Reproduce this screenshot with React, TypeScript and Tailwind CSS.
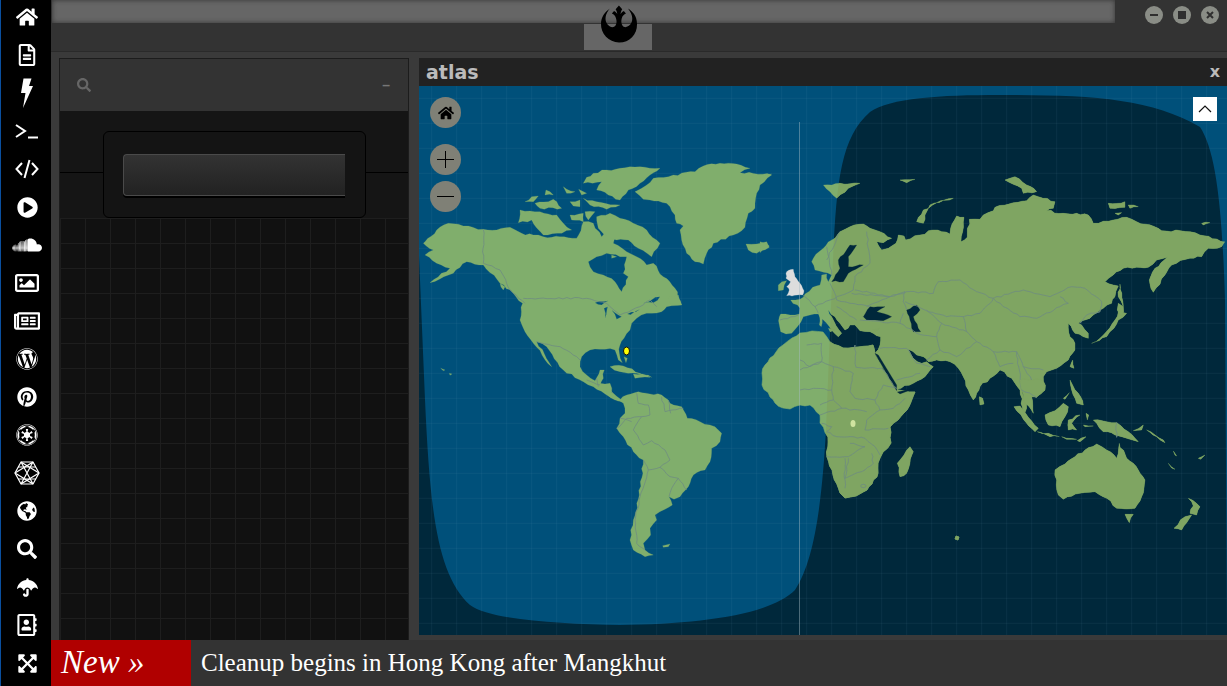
import {
  FaHome, FaRegFileAlt, FaPlayCircle, FaSoundcloud, FaRegImage, FaRegNewspaper, FaWordpress, FaPinterest,
  FaEmpire, FaGlobeAmericas, FaSearch, FaUmbrella, FaRegAddressBook, FaExpandArrowsAlt, FaRebel,
} from "react-icons/fa";

const DAY_SEA = "#00507a";
const NIGHT_SEA = "#00283b";

// night side of the map, in page coordinates
const nightShape =
  "M419 256 L425 400 C430 510 437 575 470 605 C490 620 560 624 620 625 C700 624 770 615 795 590 C815 560 822 500 826 430 L832 283 C836 190 838 140 870 112 C890 98 940 95 1000 95 C1090 95 1150 98 1200 127 C1215 150 1222 200 1225 300 L1227 636 L419 636 Z";

// breaks long straight edges into small wobbly steps so coasts read as coasts
function rough(points: string, step = 14, amp = 3.5, closed = true) {
  const pts = points.trim().split(/\s+/).map((p) => p.split(",").map(Number));
  const out: string[] = [];
  const count = closed ? pts.length : pts.length - 1;
  for (let i = 0; i < count; i++) {
    const [x1, y1] = pts[i];
    const [x2, y2] = pts[(i + 1) % pts.length];
    const len = Math.hypot(x2 - x1, y2 - y1);
    const n = Math.max(1, Math.round(len / step));
    out.push(`${x1},${y1}`);
    for (let k = 1; k < n; k++) {
      const x = x1 + ((x2 - x1) * k) / n;
      const y = y1 + ((y2 - y1) * k) / n;
      const s = Math.sin(x * 12.9898 + y * 78.233) * 43758.5453;
      const off = (s - Math.floor(s) - 0.5) * 2 * amp;
      out.push(`${(x - ((y2 - y1) / len) * off).toFixed(1)},${(y + ((x2 - x1) / len) * off).toFixed(1)}`);
    }
  }
  if (!closed) out.push(pts[pts.length - 1].join(","));
  return out.join(" ");
}

// origin 420,140 at 3x
const americasNorth = [
  "645,155 665,145 700,115 760,105 825,95 850,78 900,70 950,72 990,85 960,98 1055,105 1020,135 1010,160 1005,205 985,220 975,262 940,285 880,310 860,340 850,372 825,365 800,340 785,300 780,270 790,258 770,250 765,225 740,190 690,180 670,178",
  "520,100 560,90 600,85 660,80 720,85 690,105 660,130 625,150 600,180 565,165 530,150 545,125 490,130 500,112",
  "430,140 465,155 440,160",
  "476,148 500,160 485,165",
  "378,150 400,165 375,165",
  "315,185 335,170 355,168 340,185",
  "345,190 385,185 400,178 425,205 360,205",
  "450,185 480,180 480,200 460,198",
  "490,175 530,185 600,195 560,208 510,195",
  "495,215 525,215 505,240",
  "530,230 570,220 600,235 640,250 680,270 720,310 695,350 655,325 625,300 590,300 565,290 535,265",
  "300,210 360,215 410,225 430,250 455,270 410,280 370,285 335,240 295,248",
  "450,225 490,220 490,245 455,240",
  "575,345 590,350 575,355",
  "745,470 775,465 785,495 750,490",
  "240,430 255,440 250,450",
  "978,312 1010,312 1040,305 1048,322 1010,340 985,330",
  "1075,435 1100,422 1090,450 1075,452",
  "570,680 610,678 660,700 695,712 650,700 600,695",
  "640,702 680,706 690,712 645,715",
  "62,685 75,690 70,692",
  "88,700 96,702 90,706",
  "612,650 622,655 618,668",
];

const northAmerica =
  "15,305 50,270 85,250 130,258 190,268 230,270 270,262 305,280 340,285 370,290 420,290 470,295 490,245 520,250 545,290 560,265 590,265 580,310 620,335 650,350 680,375 700,370 730,410 765,445 785,495 740,500 725,515 680,520 650,535 635,550 630,570 612,595 600,615 598,640 607,668 595,660 585,630 555,628 510,630 485,650 480,680 500,705 525,722 540,690 553,690 550,715 540,735 580,760 610,785 580,775 520,740 490,725 430,690 380,620 350,605 395,680 340,610 315,575 300,540 308,490 280,460 240,430 190,375 140,365 100,400 30,428 90,385 50,370 15,345 40,330 10,310";
const northAmericaWaters = [
  "505,365 530,350 560,340 600,350 620,350 610,400 625,410 605,455 585,425 550,405 520,395",
  "525,488 565,482 545,495",
  "552,505 563,500 555,535",
  "575,510 605,530 590,538",
  "622,522 660,508 632,524",
  "668,490 720,470 700,488",
];
const britain = "1100,395 1120,388 1125,410 1140,430 1152,452 1148,465 1100,467 1108,450 1100,440 1112,425 1098,415";

const americasBorders = [
  "190,268 190,370 240,390 270,450 315,490",
  "310,475 500,475 560,490 600,525 660,500 690,480 710,500",
  "350,605 420,620 470,650 480,660",
  "500,720 540,735 580,760",
  "530,715 535,740",
];

// origin 600,380 at 3x
const southAmerica =
  "0,10 30,10 35,40 60,60 80,45 115,35 150,42 185,45 210,70 245,80 262,115 300,125 345,140 365,160 360,185 335,205 330,245 315,270 280,285 265,320 240,350 222,358 207,350 217,375 195,388 165,405 170,420 150,445 152,465 130,490 135,510 160,525 135,530 100,510 90,480 92,450 100,420 118,345 130,240 100,215 70,170 50,145 60,115 75,100 70,70 45,60 20,40 0,20";
const falklands = "188,497 210,492 205,500 190,502";
const southBorders = [
  "110,40 115,70 145,75 150,105 125,110 100,150 130,195 155,182 195,210 210,240 180,262 210,290 235,295 215,325 207,350",
  "50,145 80,115 125,110",
  "185,50 195,95 250,85",
  "130,240 145,270 180,262",
  "145,270 120,350 105,420 110,490 135,510",
  "235,295 260,330",
  "60,115 95,125",
  "205,60 212,100",
];

// page coordinates
const africa =
  "762,373 765,365 770,358 776,352 783,345 792,338 800,333 812,331 823,332 830,342 843,348 858,347 873,345 875,355 881,366 887,377 898,390 915,392 911,402 907,410 898,420 890,427 891,443 883,452 878,463 878,473 872,484 867,490 856,496 845,498 840,493 833,475 827,457 828,437 820,423 820,415 810,405 800,405 790,409 783,408 775,403 770,397 762,385";

// origin 800,330 at 3x
const africaBorders = [
  "65,40 65,95 100,110 160,130 150,185 165,205 225,210 250,165 290,175",
  "165,45 168,112 245,115 290,175",
  "225,210 240,240 200,270 195,300 265,295",
  "240,240 280,235 315,205",
  "100,110 95,180 100,210 125,235 60,255",
  "125,235 200,245",
  "100,210 60,225",
  "80,305 110,320 150,320 195,325 225,350 240,375",
  "150,340 195,350 145,380 80,380",
  "145,385 135,445 185,425 220,400 215,370",
  "135,385 135,475",
  "0,120 65,95",
  "0,180 40,175 95,180",
  "65,280 95,290 80,305",
  "20,45 65,40",
  "65,95 30,110 0,90",
];
const madagascar = "292,400 312,375 330,350 340,365 330,400 320,430 300,440";
const sriLanka = "538,200 548,205 552,222 540,225";
const redSea = ["225,70 235,75 290,165 290,182 265,140", "292,186 345,175 300,192"];

// origin 760,160 at 3x
const eurasia =
  "58,470 62,462 105,465 118,462 120,445 92,420 120,418 135,402 158,382 180,375 185,345 200,342 205,365 215,345 165,330 155,305 160,295 190,265 215,240 240,215 270,200 310,192 330,205 360,215 395,235 370,248 350,245 365,270 385,265 408,250 415,225 432,228 437,240 480,225 520,210 545,215 570,222 572,205 590,168 612,172 608,215 603,245 622,232 628,178 660,178 670,165 700,152 705,142 760,128 800,122 820,105 850,115 885,125 880,145 860,152 910,160 950,160 985,165 1000,190 1060,180 1100,172 1130,185 1195,205 1205,212 1262,212 1320,225 1395,245 1385,260 1345,265 1325,290 1290,295 1235,315 1215,345 1180,397 1168,360 1185,325 1222,292 1190,300 1165,322 1130,322 1090,325 1060,345 1035,365 1060,375 1075,378 1065,410 1055,430 1030,445 1000,465 975,480 955,490 965,495 985,520 985,535 970,530 945,520 925,490 930,530 945,550 945,570 925,600 890,625 860,635 850,650 855,690 830,710 815,700 820,680 795,680 785,690 790,710 800,745 790,770 780,690 765,670 755,655 720,630 690,655 660,680 650,700 640,720 625,690 610,650 595,625 570,605 530,600 505,605 490,590 470,585 445,568 460,595 485,610 500,605 520,620 495,650 460,670 410,688 380,650 345,580 360,555 362,530 330,515 300,512 285,495 270,495 255,510 240,490 225,470 205,450 215,470 245,520 235,530 215,510 190,480 175,462 150,465 130,470 112,500 95,520 78,522 62,515 58,495";
const eurasiaIslands = [
  "190,75 240,70 300,70 265,85 230,115 210,95",
  "470,185 490,150 530,128 580,115 510,135 495,165 490,190",
  "735,60 765,50 800,75 830,95 790,100 785,85",
  "1045,130 1095,125 1095,142 1050,145",
  "1105,135 1135,140 1110,145",
  "1065,160 1085,158 1075,165",
  "1325,190 1350,188 1330,195",
  "420,60 465,58 440,68",
  "995,550 1040,530 1062,505 1075,480 1100,460 1075,455 1065,480 1020,535",
  "1075,430 1090,440 1085,470 1072,450",
  "1080,372 1090,440 1075,410",
  "180,460 186,462 184,500 178,495",
  "205,505 225,510 210,515",
  "340,510 360,505 345,515",
  "938,600 942,625 930,620",
  "0,45 35,42 0,65",
  "0,245 28,258 0,278",
];
const innerSeas = [
  "215,365 240,325 235,300 270,255 290,255 265,290 265,320 310,315 265,340 250,365",
  "310,470 330,440 375,440 350,455 395,470 370,482 320,480",
  "440,450 470,435 480,450 460,470 482,515 460,515 450,480",
];
const eurasiaBorders = [
  "285,390 390,410 440,395 520,400 535,365 600,360 650,395 700,415 790,390 870,410 935,380 975,385 1025,425 1020,455 980,465 960,490",
  "700,415 730,440 780,470 830,475 900,440 925,430 900,410",
  "435,425 495,450 560,470 610,470 660,460 690,430 700,415",
  "390,410 435,395 430,425 440,450",
  "610,470 620,515 650,545 700,575 770,575 790,620 850,630",
  "300,480 420,490 470,520 530,530 540,570 500,600",
  "530,530 545,490 620,515",
  "540,570 590,590 650,545",
  "700,575 720,620 760,610",
  "770,575 785,690",
  "360,565 440,565 470,610 510,620",
  "410,660 480,640",
  "130,405 165,440 210,420 280,390 285,350 330,310 320,215",
  "210,370 230,420 270,430 330,440",
  "165,440 175,460",
  "200,260 215,345",
  "240,215 200,300",
  "115,465 60,480",
  "275,400 390,410 320,440",
  "230,440 290,480",
  "790,620 815,660 850,690",
  "500,450 545,490",
  "420,490 430,460",
];

// origin 1000,380 at 3x
const oceania = [
  "60,0 125,0 135,30 110,52 95,50 100,100 75,70 65,30",
  "42,80 60,78 85,112 115,145 105,155 70,118",
  "112,155 145,160 178,170 150,170",
  "185,170 230,178 200,178",
  "232,182 258,170 240,185",
  "135,105 165,92 190,70 205,80 195,110 180,140 145,135",
  "205,120 240,105 215,130 230,150 205,150",
  "250,135 280,138 255,140",
  "258,100 266,105 262,120",
  "280,120 320,125 350,128 385,155 415,185 365,170 345,165 310,155 290,130",
  "400,152 430,135 425,150",
  "440,150 490,180 495,188 470,170",
  "210,0 235,40 250,75 230,70 215,30",
  "190,55 208,38 195,58",
  "165,270 195,252 225,230 255,210 290,192 320,210 350,235 358,190 380,235 415,270 435,300 432,325 425,350 405,385 350,385 320,355 285,335 240,340 190,358 175,345 170,300",
  "375,403 400,403 388,428",
  "565,355 600,380 590,405 570,400 580,378",
  "575,405 545,450 522,445 555,410",
  "520,213 530,228 525,225",
  "505,250 525,268 515,264",
  "595,235 615,225 602,238",
];

const Line = ({ points }: { points: string }) => (
  <polyline points={rough(points, 12, 2.5, false)} fill="none" stroke="#6f8b82" strokeWidth={2.4} strokeLinejoin="round" />
);

const Shape = ({ points, fill }: { points: string; fill?: string }) => (
  <polygon points={rough(points)} fill={fill} />
);

function Land({ fill }: { fill: string }) {
  const outline = [northAmerica, ...northAmericaWaters].map((p) => `M${rough(p).replace(/ /g, " L")} Z`).join(" ");
  return (
    <g fill={fill} stroke={fill} strokeWidth={0.6} strokeLinejoin="round">
      <g transform="translate(420 140) scale(0.3333)">
        <path d={outline} fillRule="evenodd" />
        {americasNorth.map((p) => <Shape key={p} points={p} />)}
        {americasBorders.map((p) => <Line key={p} points={p} />)}
        <polygon points={rough(britain, 8, 2)} fill="#dddddd" stroke="#dddddd" />
      </g>
      <g transform="translate(600 380) scale(0.3333)">
        <Shape points={southAmerica} />
        <polygon points={falklands} />
        {southBorders.map((p) => <Line key={p} points={p} />)}
      </g>
      <polygon points={rough(africa, 5, 1)} />
      <polygon points="956,536 959,537 958,540 955,539" />
      <g transform="translate(760 160) scale(0.3333)">
        <Shape points={eurasia} />
        {eurasiaIslands.map((p) => <Shape key={p} points={p} />)}
        {innerSeas.map((p) => <polygon key={p} points={rough(p, 12, 2.5)} fill={NIGHT_SEA} stroke={NIGHT_SEA} />)}
        {eurasiaBorders.map((p) => <Line key={p} points={p} />)}
      </g>
      <g transform="translate(800 330) scale(0.3333)">
        <Shape points={madagascar} />
        <polygon points={sriLanka} />
        {redSea.map((p) => <polygon key={p} points={p} fill={NIGHT_SEA} stroke={NIGHT_SEA} />)}
        {africaBorders.map((p) => <Line key={p} points={p} />)}
        <ellipse cx={190} cy={468} rx={8} ry={5} fill="none" stroke="#6f8b82" strokeWidth={2.4} />
      </g>
      <g transform="translate(1000 380) scale(0.3333)">
        {oceania.map((p) => <Shape key={p} points={p} />)}
        <Line points="350,128 350,172" />
        <Line points="65,30 110,52" />
      </g>
    </g>
  );
}

function WorldMap() {
  const vertical = Array.from({ length: 32 }, (_, i) => 431.7 + i * 25);
  const horizontal = Array.from({ length: 22 }, (_, i) => 98.3 + i * 25);
  return (
    <svg className="block w-full h-full" viewBox="419 86 808 549" preserveAspectRatio="none">
      <defs>
        <clipPath id="night">
          <path d={nightShape} />
        </clipPath>
      </defs>
      <rect x={419} y={86} width={808} height={549} fill={DAY_SEA} />
      <path d={nightShape} fill={NIGHT_SEA} />
      {vertical.map((x) => <line key={x} x1={x} x2={x} y1={86} y2={635} stroke="#7fb0c8" strokeOpacity={0.08} />)}
      {horizontal.map((y) => <line key={y} x1={419} x2={1227} y1={y} y2={y} stroke="#7fb0c8" strokeOpacity={0.08} />)}
      <Land fill="#80ae6c" />
      <g clipPath="url(#night)">
        <Land fill="#7fa562" />
      </g>
      <line x1={799.5} x2={799.5} y1={122} y2={635} stroke="#a9bcc6" strokeOpacity={0.45} />
      <ellipse cx={626.5} cy={351} rx={3} ry={4} fill="#ffff00" stroke="#111" />
      <ellipse cx={853} cy={423.5} rx={2.5} ry={3.5} fill="#cfe3a0" />
    </svg>
  );
}

const TerminalIcon = () => (
  <svg width="24" height="16" viewBox="0 0 24 16" fill="none" stroke="currentColor" strokeWidth="2">
    <path d="M1 2 L10 8 L1 14" />
    <path d="M13 14.5 H23" />
  </svg>
);

const CodeIcon = () => (
  <svg width="24" height="20" viewBox="0 0 24 20" fill="none" stroke="currentColor" strokeWidth="2">
    <path d="M7 4 L1.5 10 L7 16" />
    <path d="M17 4 L22.5 10 L17 16" />
    <path d="M14.5 1 L9.5 19" />
  </svg>
);

const BoltIcon = () => (
  <svg width="12" height="30" viewBox="0 0 12 30" fill="currentColor">
    <path d="M2.5 0.5 H10.5 L8 8 H12 L2 30 L4.5 15 H0 Z" />
  </svg>
);

const HexIcon = () => (
  <svg width="26" height="24" viewBox="0 0 26 24" fill="none" stroke="currentColor" strokeWidth="1.2">
    <path d="M7 1 H19 L25 12 L19 23 H7 L1 12 Z" />
    <path d="M7 1 L19 23 M19 1 L7 23 M1 12 L19 1 M1 12 L19 23 M25 12 L7 1 M25 12 L7 23" />
    <path d="M4 6 H22 M4 18 H22" />
  </svg>
);

const sideIcons = [
  <FaHome size={22} />,
  <FaRegFileAlt size={22} />,
  <BoltIcon />,
  <TerminalIcon />,
  <CodeIcon />,
  <FaPlayCircle size={21} />,
  <FaSoundcloud size={30} />,
  <FaRegImage size={24} />,
  <FaRegNewspaper size={26} />,
  <FaWordpress size={22} />,
  <FaPinterest size={20} />,
  <FaEmpire size={22} />,
  <HexIcon />,
  <FaGlobeAmericas size={20} />,
  <FaSearch size={20} />,
  <FaUmbrella size={21} />,
  <FaRegAddressBook size={22} />,
  <FaExpandArrowsAlt size={21} />,
];

function WindowButton({ d, filled }: { d: string; filled?: boolean }) {
  return (
    <div className="w-[18px] h-[18px] rounded-full bg-[#8a8d86] flex items-center justify-center">
      <svg width="10" height="10" viewBox="0 0 10 10" fill={filled ? "#2f2f2f" : "none"} stroke="#2f2f2f" strokeWidth="2">
        <path d={d} />
      </svg>
    </div>
  );
}

function MapButton({ children }: { children: React.ReactNode }) {
  return (
    <div className="w-[31px] h-[31px] rounded-full bg-[#7f8076] flex items-center justify-center text-black">
      {children}
    </div>
  );
}

export default function App() {
  return (
    <div className="w-[1227px] h-[686px] flex overflow-hidden bg-[#333333] font-['Liberation_Sans',sans-serif]">
      {/* Sidebar */}
      <div className="w-[51px] shrink-0 bg-black border-l border-[#0a4f9e] flex flex-col items-center pl-[2px] -mt-[2px] text-white">
        {sideIcons.map((icon, i) => (
          <div key={i} className="h-[38px] w-full shrink-0 flex items-center justify-center">
            {icon}
          </div>
        ))}
      </div>

      <div className="flex-1 flex flex-col min-w-0">
        {/* Title bar */}
        <div className="relative h-[51px] shrink-0 bg-[#333333]">
          <div className="flex h-6">
            <div className="ml-px w-[1063px] h-[23px] bg-[#666666] shadow-[inset_0_0_5px_#333333]" />
            <div className="flex-1 flex items-start gap-[10px] pt-[6px] pl-[30px]">
              <WindowButton d="M1 5 H9" />
              <WindowButton d="M2 2 H8 V8 H2 Z" filled />
              <WindowButton d="M2 2 L8 8 M8 2 L2 8" />
            </div>
          </div>
          <div className="ml-[533px] w-[68px] h-[26px] bg-[#666666]" />
          <FaRebel size={38} className="absolute left-[549px] top-[5px] text-black" />
        </div>

        {/* Work area */}
        <div className="flex-1 min-h-0 flex bg-[#3a3a3a] border-t border-[#2a2a2a] pt-[6px]">
          <div className="ml-2 w-[350px] flex flex-col border-t border-l border-r border-[#1c1c1c]">
            <div className="h-[52px] shrink-0 bg-[#333333] flex items-center justify-between pl-[17px] pr-[18px] text-[#666666]">
              <FaSearch size={14} />
              <span className="text-[#777777] text-sm font-bold">–</span>
            </div>
            <div className="relative h-[107px] shrink-0 bg-[#151515] flex items-end justify-center">
              <div className="absolute left-0 right-0 top-[61px] h-px bg-black" />
              <div className="relative w-[263px] h-[87px] bg-[#141414] border border-black rounded-md flex items-center justify-center">
                <div className="w-[222px] h-[42px] rounded-l bg-gradient-to-b from-[#333333] to-[#222222] border-t border-l border-b border-[#4a4a4a] shadow-[0_2px_0_#000]" />
              </div>
            </div>
            <div className="flex-1 bg-[#111111] bg-[linear-gradient(#1e1e1e_1px,transparent_1px),linear-gradient(90deg,#1e1e1e_1px,transparent_1px)] bg-[size:25px_25px]" />
          </div>

          <div className="ml-[10px] flex-1 min-w-0 flex flex-col pb-[5px]">
            <div className="h-7 shrink-0 bg-[#222222] flex items-center justify-between pl-[7px] pr-[7px] font-['DejaVu_Sans',sans-serif] font-bold text-[#bbbbbb]">
              <span className="text-[19px] leading-none">atlas</span>
              <span className="text-[16px] leading-none">x</span>
            </div>
            <div className="relative flex-1 min-h-0">
              <WorldMap />
              <div className="absolute left-[11px] top-[11px] flex flex-col">
                <MapButton><FaHome size={16} /></MapButton>
                <div className="h-4" />
                <MapButton>
                  <svg width="17" height="17" viewBox="0 0 17 17" stroke="#000" strokeWidth="1"><path d="M8.5 0 V17 M0 8.5 H17" /></svg>
                </MapButton>
                <div className="h-[6px]" />
                <MapButton>
                  <svg width="17" height="17" viewBox="0 0 17 17" stroke="#000" strokeWidth="1"><path d="M0 8.5 H17" /></svg>
                </MapButton>
              </div>
              <div className="absolute right-[10px] top-[11px] w-6 h-6 bg-white flex items-center justify-center">
                <svg width="14" height="8" viewBox="0 0 14 8" fill="none" stroke="#111" strokeWidth="1.2"><path d="M1 7 L7 1 L13 7" /></svg>
              </div>
            </div>
          </div>
        </div>

        {/* News ticker */}
        <div className="h-[46px] shrink-0 bg-[#333333] flex items-center font-['Liberation_Serif',serif] text-white">
          <div className="w-[140px] h-full bg-[#b00000] flex items-center pl-[10px] text-[33px] italic whitespace-nowrap">
            New »
          </div>
          <div className="pl-[10px] text-[25px] whitespace-nowrap">Cleanup begins in Hong Kong after Mangkhut</div>
        </div>
      </div>
    </div>
  );
}
